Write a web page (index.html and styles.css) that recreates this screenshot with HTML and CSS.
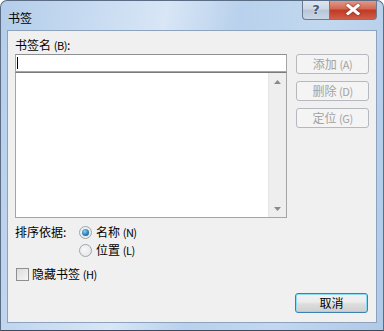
FILE: index.html
```html
<!DOCTYPE html>
<html>
<head>
<meta charset="utf-8">
<link rel="stylesheet" href="styles.css">
</head>
<body>
<div class="window">
  <div class="titlebar">
    <span class="title">书签</span>
    <div class="caption">
      <div class="cbtn help"><span>?</span></div>
      <div class="cbtn close">
        <svg width="14" height="11" viewBox="0 0 14 11"><path d="M2 1.5 L12 9.5 M12 1.5 L2 9.5" stroke="#ffffff" stroke-width="3" stroke-linecap="square"/></svg>
      </div>
    </div>
  </div>
  <div class="client">
    <div class="label">书签名 <span class="key">(B)</span>:</div>
    <div class="main">
      <div class="leftcol">
        <div class="input"><span class="caret"></span></div>
        <div class="list">
          <div class="listbody"></div>
          <div class="scroll">
            <svg width="7" height="4" viewBox="0 0 7 4"><path d="M0 4 L3.5 0 L7 4 Z" fill="#8a8a8a"/></svg>
            <svg width="7" height="4" viewBox="0 0 7 4"><path d="M0 0 L3.5 4 L7 0 Z" fill="#8a8a8a"/></svg>
          </div>
        </div>
      </div>
      <div class="btncol">
        <div class="btn disabled">添加 <span class="key">(A)</span></div>
        <div class="btn disabled">删除 <span class="key">(D)</span></div>
        <div class="btn disabled">定位 <span class="key">(G)</span></div>
      </div>
    </div>
    <div class="sort">
      <div class="sortlabel">排序依据:</div>
      <div class="radios">
        <div class="radio-row"><span class="radio checked"><span class="dot"></span></span><span>名称 <span class="key">(N)</span></span></div>
        <div class="radio-row"><span class="radio"></span><span>位置 <span class="key">(L)</span></span></div>
      </div>
    </div>
    <div class="check-row"><span class="checkbox"></span><span>隐藏书签 <span class="key">(H)</span></span></div>
    <div class="footer">
      <div class="btn default">取消</div>
    </div>
  </div>
</div>
</body>
</html>
```
FILE: styles.css
```css
html, body {
  margin: 0;
  padding: 0;
  background: #ffffff;
}
body {
  font-family: "Noto Sans CJK SC", "DejaVu Sans", sans-serif;
  font-size: 12px;
  color: #000;
}
.key {
  font-size: 11px;
  letter-spacing: -0.5px;
}
.window {
  width: 384px;
  height: 331px;
  box-sizing: border-box;
  border-radius: 7px 7px 0 0;
  border: 1px solid #5b6d84;
  border-bottom-color: #3c4a5c;
  background: linear-gradient(100deg, #b4cdea 0%, #c6daf1 20%, #d8e6f6 38%, #b9d1ec 55%, #c2d8f0 75%, #afc9e7 100%);
  display: flex;
  flex-direction: column;
  overflow: hidden;
}
.titlebar {
  height: 29px;
  display: flex;
  justify-content: space-between;
  align-items: flex-start;
  flex-shrink: 0;
}
.title {
  margin: 10px 0 0 7px;
  line-height: 14px;
  font-size: 12px;
  color: #000;
}
.caption {
  display: flex;
  margin-right: 6px;
  margin-top: -1px;
}
.cbtn {
  height: 20px;
  box-sizing: border-box;
  border: 1px solid #6c7a8d;
  border-top: none;
  display: flex;
  align-items: center;
  justify-content: center;
}
.help {
  width: 27px;
  border-radius: 0 0 0 4px;
  border-right: none;
  background: linear-gradient(#dfe7f0 0%, #cdd8e5 45%, #b7c6d8 55%, #c9d6e5 100%);
}
.help span {
  font-family: "DejaVu Sans", sans-serif;
  font-weight: bold;
  font-size: 13px;
  color: #4a5a70;
  text-shadow: 0 0 2px #fff;
  line-height: 14px;
}
.close {
  width: 48px;
  border-radius: 0 0 4px 0;
  background: linear-gradient(#e2a090 0%, #d26a55 45%, #c13a25 55%, #d05e48 100%);
}
.close svg { filter: drop-shadow(0 0 1px #7a2a20); }
.client {
  flex: 1;
  margin: 0 6px 7px 6px;
  background: #f0f0f0;
  border: 1px solid #8da2bd;
  padding: 0 7px 0 7px;
  display: flex;
  flex-direction: column;
}
.label {
  margin-top: 7px;
  line-height: 14px;
  height: 16px;
}
.main {
  display: flex;
  gap: 9px;
}
.leftcol {
  width: 272px;
  display: flex;
  flex-direction: column;
}
.input {
  height: 18px;
  box-sizing: border-box;
  background: #fff;
  border: 1px solid #a5a5a5;
  border-top-color: #8e8f8f;
  position: relative;
}
.caret {
  position: absolute;
  left: 1px;
  top: 2px;
  width: 1px;
  height: 12px;
  background: #000;
}
.list {
  height: 146px;
  box-sizing: border-box;
  background: #fff;
  border: 1px solid #a5a5a5;
  border-top: 1px solid #7a7a7a;
  display: flex;
}
.listbody { flex: 1; }
.scroll {
  width: 17px;
  background: #eeeeee;
  border-left: 1px solid #e6e6e6;
  display: flex;
  flex-direction: column;
  justify-content: space-between;
  align-items: center;
  padding: 7px 0 6px 0;
}
.btncol {
  display: flex;
  flex-direction: column;
  gap: 7px;
}
.btn {
  width: 73px;
  height: 20px;
  box-sizing: border-box;
  border-radius: 3px;
  display: flex;
  align-items: center;
  justify-content: center;
  line-height: 14px;
  white-space: pre;
}
.btn.disabled {
  border: 1px solid #b5b9bd;
  background: #f4f4f4;
  color: #a3a3a3;
}
.sort {
  display: flex;
  margin-top: 6px;
}
.sortlabel {
  width: 64px;
  line-height: 14px;
  padding-top: 1px;
}
.radios {
  display: flex;
  flex-direction: column;
  gap: 2px;
}
.radio-row {
  display: flex;
  align-items: center;
  gap: 4px;
  height: 16px;
  line-height: 14px;
}
.radio {
  width: 13px;
  height: 13px;
  box-sizing: border-box;
  border-radius: 50%;
  border: 1px solid #9ca6b1;
  background: radial-gradient(circle at 40% 40%, #f8f8f8 0%, #e2e2e2 100%);
  display: flex;
  align-items: center;
  justify-content: center;
}
.radio .dot {
  width: 7px;
  height: 7px;
  border-radius: 50%;
  background: radial-gradient(circle at 40% 35%, #8fd3f2 0%, #2a7fb4 55%, #16507e 100%);
}
.check-row {
  display: flex;
  align-items: center;
  gap: 3px;
  margin-top: 9px;
  height: 14px;
  line-height: 14px;
}
.checkbox {
  width: 13px;
  height: 13px;
  box-sizing: border-box;
  border: 1px solid #8f8f8f;
  background: linear-gradient(135deg, #dcdcdc 0%, #f6f6f6 100%);
  margin-left: 1px;
}
.footer {
  display: flex;
  justify-content: flex-end;
  margin-top: 12px;
  padding-right: 1px;
}
.btn.default {
  border: 1px solid #3c7fb1;
  box-shadow: inset 0 0 0 1px #8ddcf5;
  background: linear-gradient(#f2f2f2 0%, #ebebeb 45%, #dddddd 55%, #cfcfcf 100%);
  color: #000;
}
```
